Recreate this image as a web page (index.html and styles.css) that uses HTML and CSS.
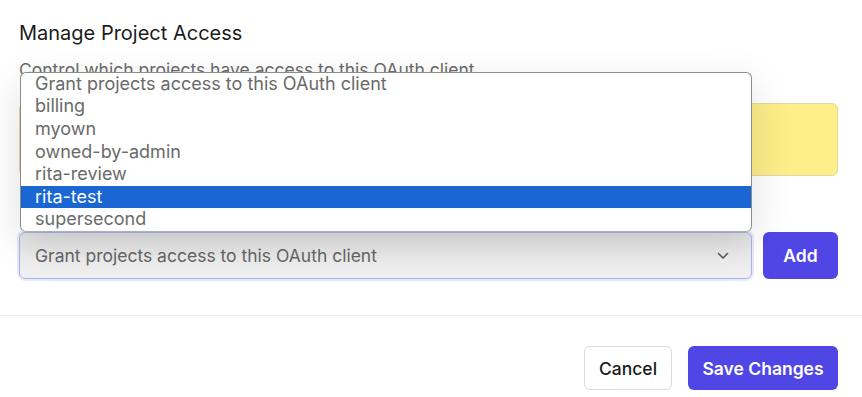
FILE: index.html
```html
<!DOCTYPE html>
<html lang="en">
<head>
    <meta charset="UTF-8">
    <meta name="viewport" content="width=device-width, initial-scale=1.0">
    <title>Manage Project Access</title>
    <link rel="stylesheet" href="styles.css">
</head>
<body>
    <div class="dialog">
        <div class="dialog-body">
            <h2 class="title">Manage Project Access</h2>
            <p class="subtitle">Control which projects have access to this OAuth client.</p>

            <div class="notice"></div>

            <div class="picker-row">
                <div class="picker">
                    <div class="select">
                        <span>Grant projects access to this OAuth client</span>
                        <svg class="chevron" width="12" height="8" viewBox="0 0 12 8">
                            <path d="M1.5 1.5 L6 6 L10.5 1.5" fill="none" stroke="#555" stroke-width="1.5" stroke-linecap="round" stroke-linejoin="round"/>
                        </svg>
                    </div>

                    <!-- lista desplegada del select -->
                    <ul class="options">
                        <li>Grant projects access to this OAuth client</li>
                        <li>billing</li>
                        <li>myown</li>
                        <li>owned-by-admin</li>
                        <li>rita-review</li>
                        <li class="selected">rita-test</li>
                        <li>supersecond</li>
                    </ul>
                </div>
                <button class="btn btn-primary btn-add">Add</button>
            </div>
        </div>

        <div class="dialog-footer">
            <button class="btn btn-secondary">Cancel</button>
            <button class="btn btn-primary">Save Changes</button>
        </div>
    </div>
</body>
</html>
```

FILE: styles.css
```css
body {
    margin: 0;
    padding: 0;
    font-family: 'Inter', 'Noto Sans', sans-serif;
    background: #fff;
    color: #1f1f1f;
}

.dialog {
    width: 862px;
}

.dialog-body {
    padding: 19px 24px 36px 19px;
}

.title {
    margin: 0;
    font-size: 20px;
    line-height: 28px;
    font-weight: 400;
    color: #1c1c1c;
}

.subtitle {
    margin: 10px 0 0;
    font-size: 17.5px;
    line-height: 26px;
    color: #6b6b6b;
    white-space: nowrap;
}

/* aviso amarillo */
.notice {
    margin-top: 20px;
    height: 71px;
    background: #fdee8a;
    border: 1px solid #e3da9e;
    border-radius: 6px;
}

.picker-row {
    display: flex;
    gap: 11px;
    margin-top: 56px;
}

.picker {
    flex: 1;
    position: relative;
}

.select {
    height: 45px;
    display: flex;
    align-items: center;
    justify-content: space-between;
    padding: 0 22px 0 15px;
    border: 1px solid #a9b1ee;
    border-radius: 6px;
    background: linear-gradient(to bottom, #e2e2e2, #eeeeee 60%, #f1f1f1);
    box-shadow: 0 0 0 2px rgba(165, 170, 240, 0.25);
    font-size: 17.5px;
    color: #666;
}

.chevron {
    display: block;
}

/* Lista abierta */
.options {
    position: absolute;
    left: 1px;
    right: 0;
    bottom: 100%;
    margin: 0;
    padding: 0;
    list-style: none;
    background: #fff;
    border: 1px solid #8c8c8c;
    border-bottom-color: #b0b0b0;
    border-radius: 6px;
    overflow: hidden;
    box-shadow: 0 12px 40px rgba(0, 0, 0, 0.13);
    z-index: 10;
}

.options li {
    height: 22.6px;
    line-height: 22.6px;
    padding: 0 14px;
    font-size: 18px;
    color: #6a6a6a;
}

.options li.selected {
    background: #1a67d4;
    color: #fff;
}

.btn {
    font-family: inherit;
    font-size: 17.5px;
    border-radius: 6px;
    cursor: pointer;
}

.btn-primary {
    background: #4f46e5;
    color: #fff;
    border: none;
    font-weight: 600;
    padding: 0 10px;
}

.btn-add {
    width: 75px;
    height: 47px;
}

.btn-secondary {
    background: #fff;
    color: #1a1a1a;
    border: 1px solid #dcdcdc;
    font-weight: 500;
    padding: 0 10px;
}

.dialog-footer {
    display: flex;
    justify-content: flex-end;
    gap: 16px;
    border-top: 1px solid #ececec;
    padding: 30px 24px 0;
}

.dialog-footer .btn {
    height: 44px;
}

.dialog-footer .btn-primary {
    width: 150px;
}

.dialog-footer .btn-secondary {
    width: 88px;
}
```
